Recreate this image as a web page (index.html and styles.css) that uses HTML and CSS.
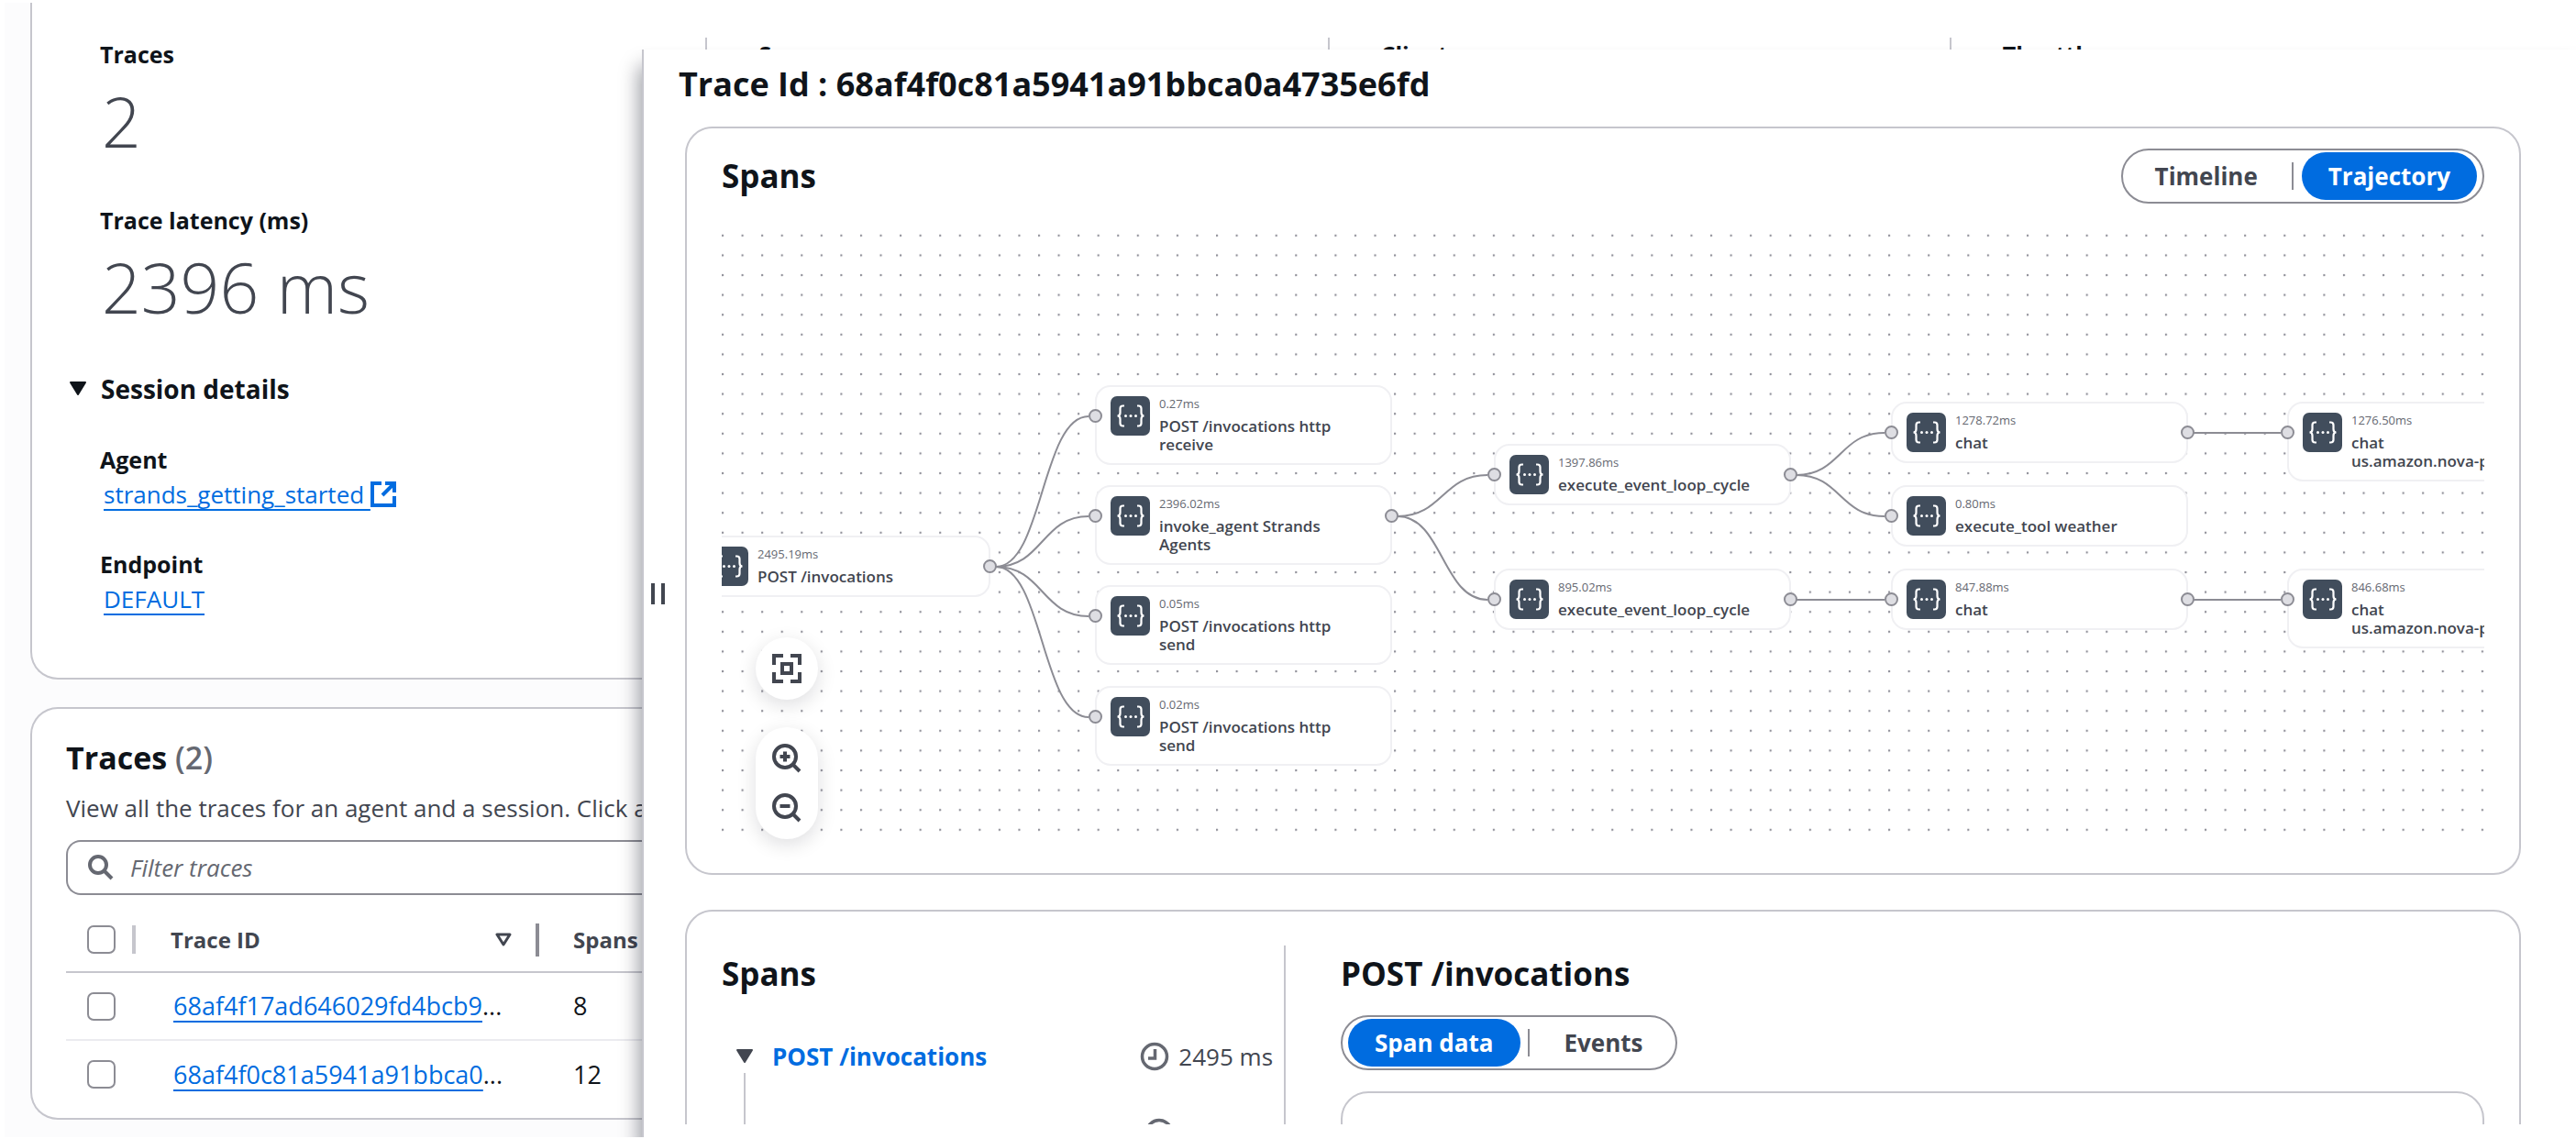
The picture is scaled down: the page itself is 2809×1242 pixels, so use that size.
FILE: index.html
```
<!DOCTYPE html>
<html lang="en">
<head>
<meta charset="utf-8">
<title>Session traces</title>
<link rel="stylesheet" href="styles.css">
</head>
<body>
<svg class="defs" aria-hidden="true">
  <symbol id="span-icon" viewBox="0 0 43 43">
    <rect width="43" height="43" rx="7" fill="#414d5c"/>
    <path d="M15 10.500h-1.500q-3 0-3 3v4.500q0 3.500-3 3.500q3 0 3 3.500v4.500q0 3 3 3h1.500M29 10.500h1.500q3 0 3 3v4.500q0 3.500 3 3.500q-3 0-3 3.500v4.500q0 3-3 3h-1.500" fill="none" stroke="#fff" stroke-width="2.200"/>
    <circle cx="16.500" cy="21.500" r="1.500" fill="#fff"/><circle cx="22" cy="21.500" r="1.500" fill="#fff"/><circle cx="27.500" cy="21.500" r="1.500" fill="#fff"/>
  </symbol>
  <symbol id="clock" viewBox="0 0 32 32">
    <circle cx="16" cy="16" r="13.500" fill="none" stroke="currentColor" stroke-width="3.500"/>
    <path d="M16.500 8v10H9" fill="none" stroke="currentColor" stroke-width="3.500"/>
  </symbol>
</svg>

<main class="page">
  <section class="card summary">
    <div class="metrics">
      <dl class="metric-col">
        <div class="metric"><dt class="label">Traces</dt><dd class="value">2</dd></div>
        <div class="metric"><dt class="label">Trace latency (ms)</dt><dd class="value">2396 ms</dd></div>
      </dl>
      <dl class="metric-col"><div class="metric"><dt class="label">Server errors</dt></div></dl>
      <dl class="metric-col"><div class="metric"><dt class="label">Client errors</dt></div></dl>
      <dl class="metric-col"><div class="metric"><dt class="label">Throttles</dt></div></dl>
    </div>
    <button class="expander" type="button" aria-expanded="true">
      <svg class="caret" viewBox="0 0 20 16"><path d="M2 1h16L10 14z" fill="currentColor" stroke="currentColor" stroke-width="2" stroke-linejoin="round"/></svg>
      Session details
    </button>
    <dl class="details">
      <div><dt class="label">Agent</dt><dd class="detail"><a class="link" href="#">strands_getting_started&nbsp;</a><svg class="external" viewBox="0 0 28 28"><path d="M12 2H2v24h24V16M16 2h10v10M25 3L13 15" fill="none" stroke="currentColor" stroke-width="4"/></svg></dd></div>
      <div><dt class="label">Endpoint</dt><dd class="detail"><a class="link" href="#">DEFAULT</a></dd></div>
    </dl>
  </section>

  <section class="card traces">
    <h2 class="title">Traces <span class="count">(2)</span></h2>
    <p class="description">View all the traces for an agent and a session. Click a trace to see its spans.</p>
    <label class="filter">
      <svg class="search" viewBox="0 0 28 28"><circle cx="11" cy="11" r="9" fill="none" stroke="currentColor" stroke-width="4"/><path d="M17 17l9 9" stroke="currentColor" stroke-width="4"/></svg>
      <input type="text" placeholder="Filter traces" aria-label="Filter traces">
    </label>
    <table class="table">
      <colgroup><col class="col-check"><col class="col-id"><col></colgroup>
      <thead>
        <tr>
          <th><div class="cell-check"><input type="checkbox" aria-label="Select all traces"></div></th>
          <th><div class="cell-id">Trace ID<svg class="sort" viewBox="0 0 18 16"><path d="M2 2h14L9 13z" fill="none" stroke="currentColor" stroke-width="3" stroke-linejoin="round"/></svg></div></th>
          <th class="spans">Spans</th>
        </tr>
      </thead>
      <tbody>
        <tr><td><input type="checkbox" aria-label="Select trace 68af4f17"></td><td class="trace"><a class="link" href="#">68af4f17ad646029fd4bcb9</a>...</td><td class="spans">8</td></tr>
        <tr><td><input type="checkbox" aria-label="Select trace 68af4f0c"></td><td class="trace"><a class="link" href="#">68af4f0c81a5941a91bbca0</a>...</td><td class="spans">12</td></tr>
      </tbody>
    </table>
  </section>
</main>

<aside class="panel">
  <div class="resize" role="separator" aria-label="Resize panel"></div>
  <h1 class="panel-title">Trace Id : 68af4f0c81a5941a91bbca0a4735e6fd</h1>
  <div class="panel-body">
    <section class="card graph-card">
      <header class="graph-head">
        <h2 class="heading">Spans</h2>
        <div class="segmented">
          <button type="button" class="segment">Timeline</button>
          <button type="button" class="segment active">Trajectory</button>
        </div>
      </header>
      <div class="graph">
        <div class="canvas">
          <svg class="edges" aria-hidden="true">
            <defs><pattern id="dots" width="21.560" height="21.600" patternUnits="userSpaceOnUse" y="-4"><circle cx="1" cy="10.800" r="1.300" fill="#91919a"/></pattern></defs>
            <rect width="100%" height="666" fill="url(#dots)"/>
            <g fill="none" stroke="#8c8c94" stroke-width="2">
              <path d="M299 368C350 368 349 204 400 204"/>
              <path d="M299 368C350 368 349 313 400 313"/>
              <path d="M299 368C350 368 349 422 400 422"/>
              <path d="M299 368C350 368 349 532 400 532"/>
              <path d="M737 313C786 313 786 268 835 268"/>
              <path d="M737 313C786 313 786 404 835 404"/>
              <path d="M1172 268C1220 268 1219 222 1268 222"/>
              <path d="M1172 268C1220 268 1219 313 1268 313"/>
              <path d="M1172 404H1268M1605 222H1700M1605 404H1700"/>
            </g>
          </svg>
          <article class="node out" style="left:-31px;top:334px"><svg class="node-icon"><use href="#span-icon"/></svg><div><p class="time">2495.19ms</p><p class="name">POST /invocations</p></div></article>
          <article class="node in" style="left:407px;top:170px"><svg class="node-icon"><use href="#span-icon"/></svg><div><p class="time">0.27ms</p><p class="name">POST /invocations http receive</p></div></article>
          <article class="node in out" style="left:407px;top:279px"><svg class="node-icon"><use href="#span-icon"/></svg><div><p class="time">2396.02ms</p><p class="name">invoke_agent Strands Agents</p></div></article>
          <article class="node in" style="left:407px;top:388px"><svg class="node-icon"><use href="#span-icon"/></svg><div><p class="time">0.05ms</p><p class="name">POST /invocations http send</p></div></article>
          <article class="node in" style="left:407px;top:498px"><svg class="node-icon"><use href="#span-icon"/></svg><div><p class="time">0.02ms</p><p class="name">POST /invocations http send</p></div></article>
          <article class="node in out" style="left:842px;top:234px"><svg class="node-icon"><use href="#span-icon"/></svg><div><p class="time">1397.86ms</p><p class="name">execute_event_loop_cycle</p></div></article>
          <article class="node in out" style="left:842px;top:370px"><svg class="node-icon"><use href="#span-icon"/></svg><div><p class="time">895.02ms</p><p class="name">execute_event_loop_cycle</p></div></article>
          <article class="node in out" style="left:1275px;top:188px"><svg class="node-icon"><use href="#span-icon"/></svg><div><p class="time">1278.72ms</p><p class="name">chat</p></div></article>
          <article class="node in" style="left:1275px;top:279px"><svg class="node-icon"><use href="#span-icon"/></svg><div><p class="time">0.80ms</p><p class="name">execute_tool weather</p></div></article>
          <article class="node in out" style="left:1275px;top:370px"><svg class="node-icon"><use href="#span-icon"/></svg><div><p class="time">847.88ms</p><p class="name">chat</p></div></article>
          <article class="node in" style="left:1707px;top:188px"><svg class="node-icon"><use href="#span-icon"/></svg><div><p class="time">1276.50ms</p><p class="name">chat<br>us.amazon.nova-pro</p></div></article>
          <article class="node in" style="left:1707px;top:370px"><svg class="node-icon"><use href="#span-icon"/></svg><div><p class="time">846.68ms</p><p class="name">chat<br>us.amazon.nova-pro</p></div></article>
        </div>
        <div class="controls">
          <div class="control-group">
            <button type="button" class="control" aria-label="Fit view"><svg viewBox="0 0 32 32"><path d="M2 12V2h10M20 2h10v10M30 20v10H20M12 30H2V20M11 11h10v10H11z" fill="none" stroke="currentColor" stroke-width="4"/></svg></button>
          </div>
          <div class="control-group">
            <button type="button" class="control" aria-label="Zoom in"><svg viewBox="0 0 32 32"><circle cx="14" cy="14" r="12" fill="none" stroke="currentColor" stroke-width="4"/><path d="M22.500 22.500L30 30M14 8.500v11M8.500 14h11" fill="none" stroke="currentColor" stroke-width="4"/></svg></button>
            <button type="button" class="control" aria-label="Zoom out"><svg viewBox="0 0 32 32"><circle cx="14" cy="14" r="12" fill="none" stroke="currentColor" stroke-width="4"/><path d="M22.500 22.500L30 30M8.500 14h11" fill="none" stroke="currentColor" stroke-width="4"/></svg></button>
          </div>
        </div>
      </div>
    </section>

    <section class="card detail-card">
      <div class="tree">
        <h2 class="heading">Spans</h2>
        <ul class="tree-list">
          <li class="tree-row">
            <svg class="caret" viewBox="0 0 20 16"><path d="M2 1h16L10 14z" fill="currentColor" stroke="currentColor" stroke-width="2" stroke-linejoin="round"/></svg>
            <a class="tree-link" href="#">POST /invocations</a>
            <svg class="clock"><use href="#clock"/></svg><span>2495 ms</span>
          </li>
          <li class="tree-child">
            <span class="child-name">POST /invocations http receive</span>
            <svg class="clock"><use href="#clock"/></svg><span>0 ms</span>
          </li>
        </ul>
      </div>
      <div class="span-detail">
        <h2 class="heading">POST /invocations</h2>
        <div class="segmented">
          <button type="button" class="segment active">Span data</button>
          <button type="button" class="segment">Events</button>
        </div>
        <div class="card data-box"></div>
      </div>
    </section>
  </div>
</aside>
</body>
</html>
```
FILE: styles.css
```
*, *::before, *::after { box-sizing: border-box; }
html, body { height: 100%; }
body {
  margin: 0;
  overflow: hidden;
  background: #fff;
  color: #0f141a;
  font: 26px/36px "Open Sans", sans-serif;
}
h1, h2, p, dl, dd, ul { margin: 0; padding: 0; }
ul { list-style: none; }
button, input { font: inherit; color: inherit; }
button { background: none; border: 0; padding: 0; }
.defs { position: absolute; width: 0; height: 0; }

.page {
  height: calc(100vh - 5px);
  margin: 3px 0 2px 5px;
  padding-left: 28px;
  background: #fcfcfd;
  overflow: hidden;
}
.card { background: #fff; border: 2px solid #c6c6cd; border-radius: 30px; }
.label { font-size: 25px; font-weight: 700; line-height: 36px; }
.link {
  color: #006ce0;
  text-decoration: underline;
  text-decoration-thickness: 2px;
  text-underline-offset: 6px;
}

/* Session summary */
.summary {
  border-width: 0 0 2px 2px;
  border-radius: 0 0 0 30px;
  padding: 38px 0 68px 40px;
}
.metrics { display: grid; grid-template-columns: repeat(4, 1fr); padding: 0 5px 0 16px; }
.metric-col { display: flex; flex-direction: column; gap: 46px; padding-left: 56px; border-left: 2px solid #c6c6cd; }
.metric-col:first-child { padding-left: 18px; border-left: 0; }
.metric { display: flex; flex-direction: column; gap: 11px; }
.value { font-size: 75px; font-weight: 300; line-height: 88px; color: #424650; padding-left: 2px; }
.expander {
  display: flex; align-items: center; gap: 15px;
  margin-top: 47px;
  font-size: 28px; font-weight: 700; line-height: 40px;
}
.caret { flex: none; width: 20px; height: 16px; }
.details { display: flex; flex-direction: column; gap: 40px; padding: 39px 0 0 34px; }
.detail { display: flex; padding: 2px 0 0 4px; }
.external { width: 28px; height: 28px; margin-top: 4px; color: #006ce0; }

/* Trace list */
.traces {
  margin-top: 30px;
  border-right: 0;
  border-radius: 30px 0 0 30px;
  padding: 31px 0 11px 37px;
}
.title { font-size: 34px; font-weight: 700; line-height: 44px; }
.count { font-weight: 600; color: #656871; }
.description { margin: 15px 0 17px; color: #424650; white-space: nowrap; }
.filter {
  display: flex; align-items: center; gap: 18px;
  height: 60px; padding: 0 22px;
  border: 2px solid #8c8c94; border-right: 0; border-radius: 16px 0 0 16px;
}
.search { width: 28px; height: 28px; color: #656871; }
.filter input { flex: 1; border: 0; outline: 0; padding: 0; background: none; }
.filter input::placeholder { color: #656871; font-style: italic; opacity: 1; }
.table { width: 100%; margin-top: 14px; border-collapse: collapse; table-layout: fixed; }
.col-check { width: 76px; }
.col-id { width: 440px; }
.table th { height: 70px; padding: 0; text-align: left; font-size: 24px; font-weight: 700; color: #424650; border-bottom: 2px solid #c6c6cd; }
.table td { height: 74px; padding: 0; font-size: 27px; border-bottom: 2px solid #ebebf0; }
.table tr:last-child td { border-bottom: 0; }
.table input { display: block; appearance: none; width: 31px; height: 31px; margin: 0 0 0 23px; border: 2px solid #8c8c94; border-radius: 7px; background: #fff; }
.cell-check { border-right: 4px solid #c6c6cd; }
.cell-id { display: flex; align-items: center; justify-content: space-between; padding: 0 26px 0 38px; border-right: 4px solid #8c8c94; }
.sort { width: 18px; height: 16px; }
.table .trace { padding-left: 41px; }
.table .spans { padding-left: 37px; }

/* Trace panel */
.panel {
  position: absolute;
  top: 54px; right: 0; bottom: 2px; left: 700px;
  display: flex; flex-direction: column;
  padding: 16px 60px 14px 45px;
  background: #fff;
  border-left: 2px solid #c6c6cd;
  box-shadow: -3px 18px 20px rgba(0, 7, 22, 0.4);
  clip-path: inset(-4px 0 0 -30px);
}
.resize {
  position: absolute; left: 8px; top: 50%;
  width: 15px; height: 23px; margin-top: -11px;
  border: solid #424650; border-width: 0 4px;
}
.panel-title { margin-left: -7px; font-size: 36px; font-weight: 700; line-height: 44px; white-space: nowrap; }
.panel-body { flex: 1; min-height: 0; overflow: hidden; display: flex; flex-direction: column; gap: 38px; padding-top: 24px; }
.panel-body > .card { flex: none; }
.heading { font-size: 35px; font-weight: 700; line-height: 44px; }

.segmented { display: inline-flex; align-items: center; height: 60px; padding: 0 6px; border: 2px solid #8c8c94; border-radius: 30px; background: #fff; }
.segment { height: 52px; padding: 0 29px; border-radius: 26px; font-weight: 700; line-height: 52px; color: #424650; }
.segment.active { background: #006ce0; color: #fff; }
.segment + .segment { position: relative; margin-left: 19px; }
.segment + .segment::before { content: ""; position: absolute; left: -11px; top: 11px; width: 2px; height: 30px; background: #8c8c94; }

.graph-card { padding: 22px 38px 32px; }
.graph-head { display: flex; justify-content: space-between; align-items: center; }
.graph { position: relative; margin-top: 28px; }
.canvas { position: relative; height: 670px; overflow: hidden; }
.edges { display: block; width: 100%; height: 100%; }
.node {
  position: absolute; width: 324px;
  display: flex; gap: 10px;
  padding: 10px 14px 10px 15px;
  background: #fff; border: 2px solid #f0f0f3; border-radius: 17px;
}
.node-icon { flex: none; width: 43px; height: 43px; }
.time { font-size: 13px; line-height: 17px; color: #656871; }
.name { width: 210px; margin-top: 6px; font-size: 17px; font-weight: 600; line-height: 20px; color: #424650; }
.node.in::before, .node.out::after {
  content: ""; position: absolute; top: 24px;
  width: 15px; height: 15px;
  background: #dedee3; border: 2px solid #8c8c94; border-radius: 50%;
}
.node.in::before { left: -9px; }
.node.out::after { right: -9px; }
.controls { position: absolute; left: 37px; bottom: 5px; display: flex; flex-direction: column; gap: 30px; }
.control-group { padding: 7px 0; background: #fff; border-radius: 34px; box-shadow: 0 6px 20px 1px rgba(0, 7, 22, 0.12); }
.control { display: block; width: 68px; height: 54px; padding: 11px 18px; color: #424650; }
.control svg { display: block; width: 32px; height: 32px; }

.detail-card { display: grid; grid-template-columns: 8fr 17fr; padding: 37px 38px 37px; }
.tree { padding: 9px 12px 60px 0; border-right: 2px solid #c6c6cd; }
.tree-list { padding-top: 50px; color: #424650; }
.tree-row { display: flex; align-items: center; padding-left: 15px; }
.tree-link { flex: 1; margin-left: 20px; color: #006ce0; font-weight: 700; text-decoration: none; }
.clock { width: 32px; height: 32px; margin-right: 10px; color: #656871; }
.tree-child { display: flex; align-items: center; margin-left: 24px; padding: 47px 40px 0 49px; border-left: 2px solid #c6c6cd; }
.child-name { flex: 1; white-space: nowrap; }
.span-detail { padding: 9px 0 0 60px; }
.span-detail .segmented { display: flex; width: max-content; margin: 23px 0; }
.data-box { height: 200px; }
```
